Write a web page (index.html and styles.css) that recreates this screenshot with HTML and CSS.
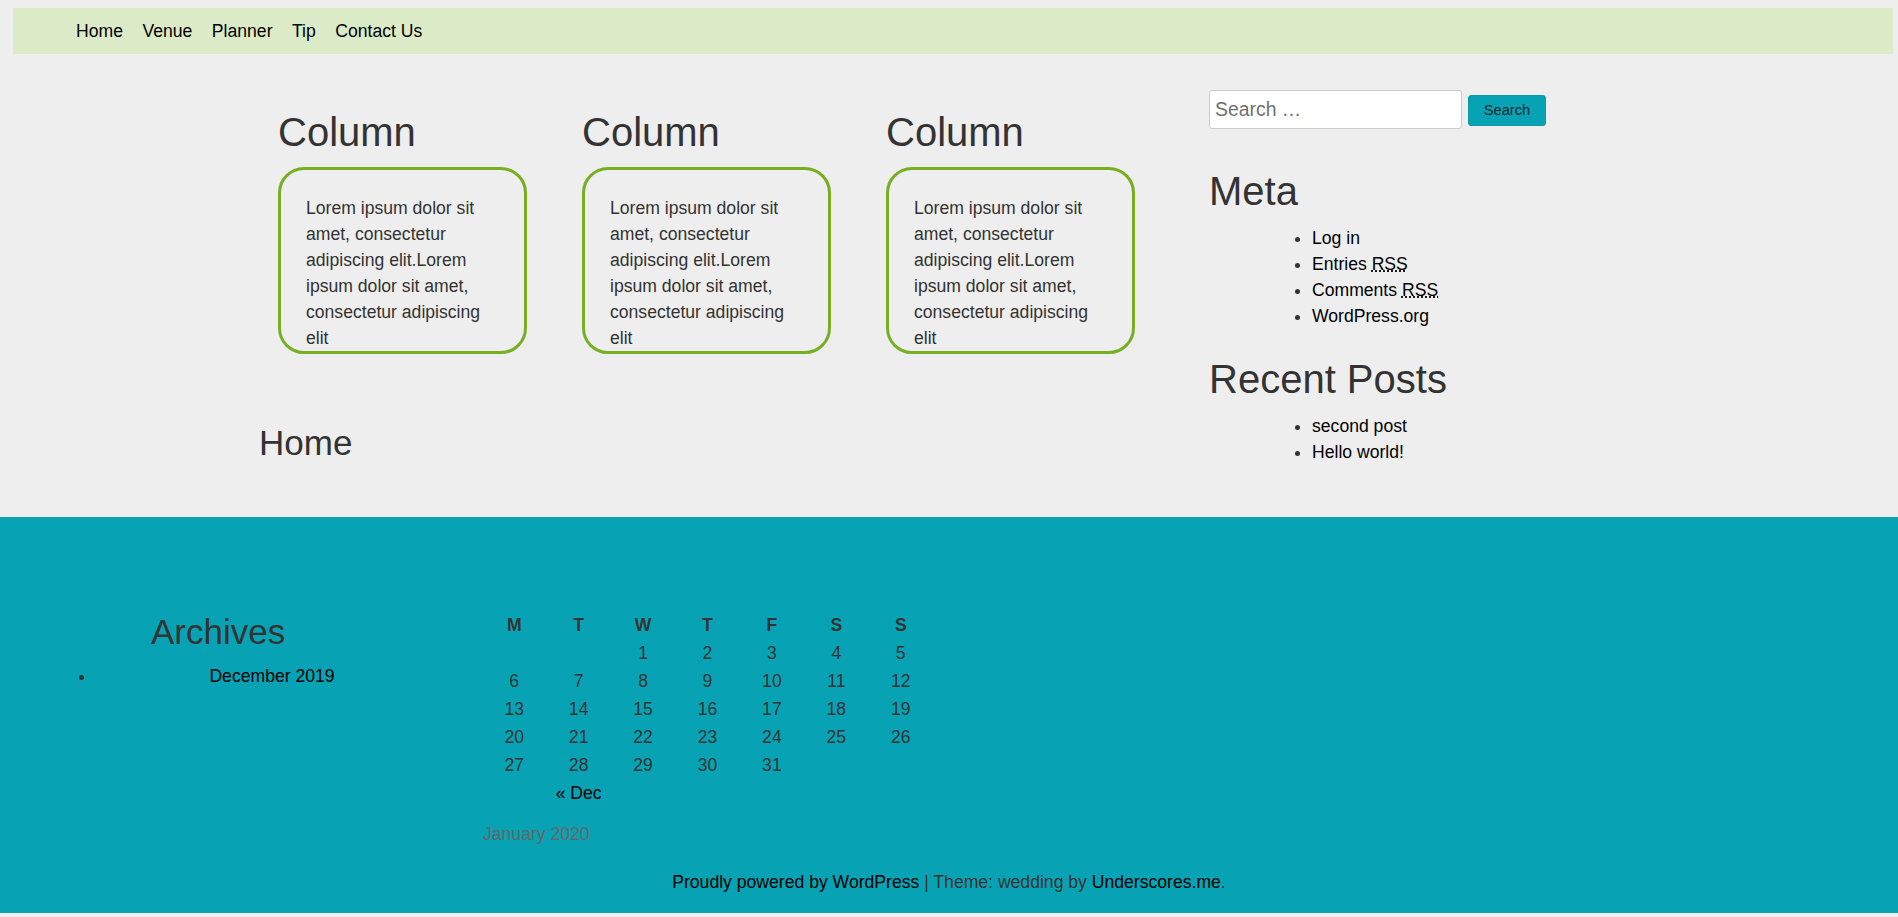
FILE: index.html
```html
<!DOCTYPE html>
<html lang="en">
<head>
<meta charset="utf-8">
<title>wedding</title>
<link rel="stylesheet" href="styles.css">
</head>
<body>
<header class="site-header">
  <nav class="main-nav">
    <ul class="menu">
      <li><a href="#">Home</a></li>
      <li><a href="#">Venue</a></li>
      <li><a href="#">Planner</a></li>
      <li><a href="#">Tip</a></li>
      <li><a href="#">Contact Us</a></li>
    </ul>
  </nav>
</header>

<div class="site-content">
  <main class="primary">
    <div class="columns">
      <div class="column">
        <h2 class="column-title">Column</h2>
        <div class="box"><p>Lorem ipsum dolor sit amet, consectetur adipiscing elit.Lorem ipsum dolor sit amet, consectetur adipiscing elit</p></div>
      </div>
      <div class="column">
        <h2 class="column-title">Column</h2>
        <div class="box"><p>Lorem ipsum dolor sit amet, consectetur adipiscing elit.Lorem ipsum dolor sit amet, consectetur adipiscing elit</p></div>
      </div>
      <div class="column">
        <h2 class="column-title">Column</h2>
        <div class="box"><p>Lorem ipsum dolor sit amet, consectetur adipiscing elit.Lorem ipsum dolor sit amet, consectetur adipiscing elit</p></div>
      </div>
    </div>
    <h1 class="page-title">Home</h1>
  </main>

  <aside class="sidebar">
    <form class="search-form">
      <input class="search-field" type="search" placeholder="Search …">
      <button class="search-submit" type="button">Search</button>
    </form>
    <section class="widget">
      <h2 class="widget-title">Meta</h2>
      <ul class="widget-list">
        <li><a href="#">Log in</a></li>
        <li><a href="#">Entries <abbr title="Really Simple Syndication">RSS</abbr></a></li>
        <li><a href="#">Comments <abbr title="Really Simple Syndication">RSS</abbr></a></li>
        <li><a href="#">WordPress.org</a></li>
      </ul>
    </section>
    <section class="widget">
      <h2 class="widget-title">Recent Posts</h2>
      <ul class="widget-list">
        <li><a href="#">second post</a></li>
        <li><a href="#">Hello world!</a></li>
      </ul>
    </section>
  </aside>
</div>

<footer class="site-footer">
  <div class="footer-widgets">
    <section class="archives">
      <h2 class="archives-title">Archives</h2>
      <ul class="archives-list">
        <li><a href="#">December 2019</a></li>
      </ul>
    </section>
    <section class="calendar-widget">
      <table class="calendar">
        <caption>January 2020</caption>
        <thead>
          <tr><th>M</th><th>T</th><th>W</th><th>T</th><th>F</th><th>S</th><th>S</th></tr>
        </thead>
        <tbody>
          <tr><td></td><td></td><td>1</td><td>2</td><td>3</td><td>4</td><td>5</td></tr>
          <tr><td>6</td><td>7</td><td>8</td><td>9</td><td>10</td><td>11</td><td>12</td></tr>
          <tr><td>13</td><td>14</td><td>15</td><td>16</td><td>17</td><td>18</td><td>19</td></tr>
          <tr><td>20</td><td>21</td><td>22</td><td>23</td><td>24</td><td>25</td><td>26</td></tr>
          <tr><td>27</td><td>28</td><td>29</td><td>30</td><td>31</td><td></td><td></td></tr>
        </tbody>
        <tfoot>
          <tr><td colspan="3"><a href="#">« Dec</a></td><td></td><td colspan="3"></td></tr>
        </tfoot>
      </table>
    </section>
  </div>
  <div class="site-info">
    <a href="#">Proudly powered by WordPress</a><span class="sep"> | </span>Theme: wedding by <a href="#">Underscores.me</a>.
  </div>
</footer>
</body>
</html>
```

FILE: styles.css
```css
html, body {
  margin: 0;
  padding: 0;
}

body {
  background: #eeeeee;
  color: #333333;
  font-family: "Liberation Sans", Arial, sans-serif;
  font-size: 17.6px;
  line-height: 26px;
}

a {
  color: #000000;
  text-decoration: none;
}

ul {
  margin: 0;
}

/* Header / nav */
.site-header {
  margin: 8px 5px 0 13px;
  background: #dbebc8;
  height: 46px;
  display: flex;
  align-items: center;
}

.menu {
  list-style: none;
  display: flex;
  gap: 19.5px;
  padding: 0 0 0 63px;
}

.menu a {
  color: #000;
  line-height: 22px;
}

/* Content */
.site-content {
  display: flex;
  padding: 36px 0 52px 259px;
}

.primary {
  width: 950px;
  padding-top: 18px;
}

.columns {
  display: flex;
  gap: 55px;
  padding-left: 19px;
}

.column {
  width: 249px;
}

.column-title {
  margin: 0;
  font-size: 40px;
  line-height: 48px;
  font-weight: normal;
  color: #333;
}

.box {
  margin-top: 11px;
  border: 3px solid #77ae24;
  border-radius: 26px;
  padding: 25px 25px 0 25px;
}

.box p {
  margin: 0;
  line-height: 26px;
  color: #333;
}

.page-title {
  margin: 68px 0 0 0;
  font-size: 35px;
  line-height: 42px;
  font-weight: normal;
  color: #333;
}

/* Sidebar */
.sidebar {
  width: 430px;
}

.search-form {
  display: flex;
  align-items: center;
  gap: 6px;
  height: 39px;
}

.search-field {
  box-sizing: border-box;
  width: 253px;
  height: 39px;
  border: 1px solid #cccccc;
  border-radius: 3px;
  background: #ffffff;
  padding: 3px 5px;
  font-family: "Liberation Sans", Arial, sans-serif;
  font-size: 19.4px;
  color: #666;
  margin: 0;
}

.search-field::placeholder {
  color: #707070;
}

.search-submit {
  box-sizing: border-box;
  margin: 2px 0 0 0;
  height: 31px;
  width: 78px;
  padding: 0;
  border: 1px solid #0c9aa9;
  border-radius: 3px;
  background: #07a2b3;
  color: rgba(0, 0, 0, 0.8);
  font-family: "Liberation Sans", Arial, sans-serif;
  font-size: 14.67px;
  line-height: 1;
}

.widget-title {
  margin: 38px 0 0 0;
  font-size: 40px;
  line-height: 48px;
  font-weight: normal;
  color: #333;
}

.widget + .widget .widget-title {
  margin-top: 26px;
}

.widget-list {
  margin-top: 10px;
  padding-left: 103px;
}

.widget-list li {
  line-height: 26px;
}

abbr[title] {
  text-decoration: underline dotted;
}

/* Footer */
.site-footer {
  background: #07a3b4;
  padding: 94px 0 18px 0;
}

.footer-widgets {
  display: flex;
  padding-left: 96px;
  gap: 34px;
}

.archives {
  width: 352px;
}

.archives-title {
  margin: 0 0 0 55px;
  font-size: 35px;
  line-height: 42px;
  font-weight: normal;
  color: #333;
}

.archives-list {
  margin-top: 10px;
  padding: 0;
}

.archives-list li {
  text-align: center;
  line-height: 26px;
}

.calendar {
  border-collapse: collapse;
  table-layout: fixed;
  width: 451px;
  caption-side: bottom;
}

.calendar caption {
  text-align: left;
  color: #666;
  padding-top: 13px;
  line-height: 28px;
  padding-left: 1px;
}

.calendar th,
.calendar td {
  padding: 0;
  height: 28px;
  line-height: 28px;
  text-align: center;
  color: #333;
}

.calendar th {
  font-weight: bold;
}

.site-info {
  margin-top: 21px;
  text-align: center;
  line-height: 26px;
  color: #333;
}
```
